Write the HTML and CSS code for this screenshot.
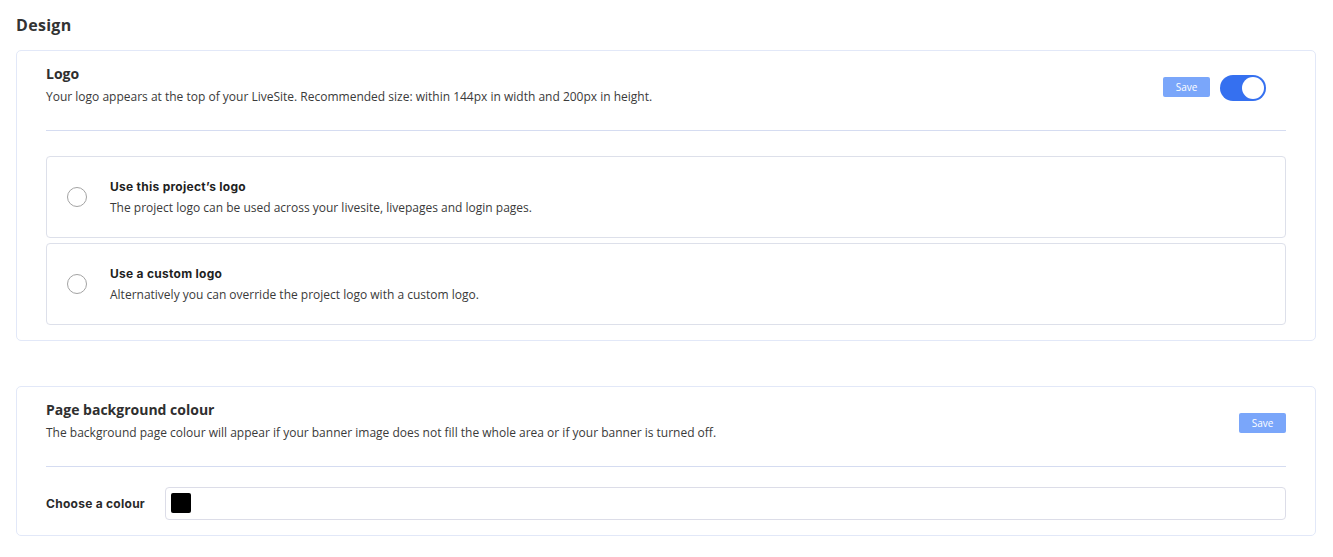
FILE: index.html
```html
<!DOCTYPE html>
<html>
<head>
<meta charset="utf-8">
<link rel="stylesheet" href="styles.css">
</head>
<body>
<h1 class="page-title">Design</h1>

<section class="card">
  <div class="card-header">
    <div class="card-text">
      <h2 class="card-title">Logo</h2>
      <p class="card-desc">Your logo appears at the top of your LiveSite. Recommended size: within 144px in width and 200px in height.</p>
    </div>
    <div class="actions">
      <button class="save-btn">Save</button>
      <span class="toggle"><span class="knob"></span></span>
    </div>
  </div>
  <div class="divider"></div>
  <div class="options">
    <label class="option">
      <span class="radio"></span>
      <span class="option-text">
        <span class="option-title">Use this project’s logo</span>
        <span class="option-desc">The project logo can be used across your livesite, livepages and login pages.</span>
      </span>
    </label>
    <label class="option">
      <span class="radio"></span>
      <span class="option-text">
        <span class="option-title">Use a custom logo</span>
        <span class="option-desc">Alternatively you can override the project logo with a custom logo.</span>
      </span>
    </label>
  </div>
</section>

<section class="card card-bg">
  <div class="card-header">
    <div class="card-text">
      <h2 class="card-title">Page background colour</h2>
      <p class="card-desc">The background page colour will appear if your banner image does not fill the whole area or if your banner is turned off.</p>
    </div>
    <div class="actions">
      <button class="save-btn">Save</button>
    </div>
  </div>
  <div class="divider"></div>
  <div class="colour-row">
    <span class="colour-label">Choose a colour</span>
    <div class="colour-input"><span class="swatch"></span></div>
  </div>
</section>
</body>
</html>
```

FILE: styles.css
```css
* { box-sizing: border-box; }
html, body { margin: 0; padding: 0; background: #fff; }
body {
  padding: 14px 17px 0 16px;
  font-family: "Open Sans", "Liberation Sans", sans-serif;
  color: #333;
}
.page-title {
  margin: 0;
  font-size: 16px;
  line-height: 22px;
  font-weight: 700;
  letter-spacing: 0.3px;
  color: #333;
}
.card {
  margin-top: 14px;
  border: 1px solid #e2e8f8;
  border-radius: 5px;
  padding: 13px 29px 15px 29px;
}
.card-bg { margin-top: 45px; }
.card-header {
  display: flex;
  justify-content: space-between;
  align-items: flex-start;
  padding-bottom: 24px;
}
.card-title {
  margin: 0;
  font-size: 14px;
  line-height: 20px;
  font-weight: 700;
  color: #2f2f2f;
}
.card-desc {
  margin: 4px 0 0;
  font-size: 12px;
  line-height: 18px;
  color: #3a3a3a;
}
.actions {
  display: flex;
  align-items: flex-start;
  gap: 10px;
  margin-top: 13px;
}
.save-btn {
  width: 47px;
  height: 20px;
  border: none;
  border-radius: 2px;
  background: #7aa6fa;
  color: #fff;
  font-family: "Open Sans", "Liberation Sans", sans-serif;
  font-size: 10px;
  line-height: 20px;
  padding: 0;
}
.toggle {
  display: flex;
  align-items: center;
  justify-content: flex-end;
  width: 46px;
  height: 26px;
  margin-top: -2px;
  margin-right: 20px;
  border-radius: 13px;
  background: #3570f0;
  padding: 2px;
}
.knob {
  width: 22px;
  height: 22px;
  border-radius: 50%;
  background: #fff;
}
.divider {
  height: 1px;
  background: #d5dcf1;
}
.options {
  display: flex;
  flex-direction: column;
  gap: 5px;
  margin-top: 25px;
}
.option {
  display: flex;
  align-items: center;
  height: 82px;
  border: 1px solid #dde0ea;
  border-radius: 4px;
  padding-left: 20px;
}
.radio {
  width: 20px;
  height: 20px;
  border: 1px solid #a3a3a3;
  border-radius: 50%;
  flex: none;
}
.option-text {
  display: flex;
  flex-direction: column;
  margin-left: 23px;
}
.option-title, .colour-label {
  font-family: "Inter", "Noto Sans", sans-serif;
  font-size: 12px;
  line-height: 18px;
  font-weight: 700;
  letter-spacing: 0.27px;
  color: #1f1f1f;
}
.option-desc {
  margin-top: 3px;
  font-size: 12px;
  line-height: 18px;
  color: #3a3a3a;
}
.colour-row {
  display: flex;
  align-items: center;
  margin-top: 20px;
}
.colour-label {
  width: 119px;
  flex: none;
  color: #2a2a2a;
}
.colour-input {
  flex: 1;
  height: 33px;
  border: 1px solid #dcdde8;
  border-radius: 4px;
  padding: 5px;
}
.swatch {
  display: block;
  width: 20px;
  height: 20px;
  border-radius: 2px;
  background: #000;
}
```
